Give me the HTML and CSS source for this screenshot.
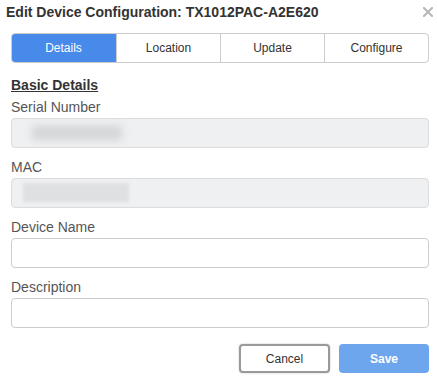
FILE: index.html
```html
<!DOCTYPE html>
<html lang="en">
<head>
    <meta charset="UTF-8">
    <meta name="viewport" content="width=device-width, initial-scale=1.0">
    <title>Edit Device Configuration</title>
    <link rel="stylesheet" href="styles.css">
</head>
<body>
    <div class="modal">
        <div class="modal-header">
            <h2>Edit Device Configuration: TX1012PAC-A2E620</h2>
            <svg class="close" width="10" height="10" viewBox="0 0 10 10">
                <path d="M1 1L9 9M9 1L1 9" stroke="#b8b8b8" stroke-width="2.2" stroke-linecap="square"/>
            </svg>
        </div>
        <div class="tabs">
            <div class="tab active">Details</div>
            <div class="tab">Location</div>
            <div class="tab">Update</div>
            <div class="tab">Configure</div>
        </div>
        <h4 class="section-title">Basic Details</h4>
        <div class="form-group first">
            <label>Serial Number</label>
            <div class="input readonly"><span class="blur blur-serial"></span></div>
        </div>
        <div class="form-group">
            <label>MAC</label>
            <div class="input readonly"><span class="blur blur-mac"></span></div>
        </div>
        <div class="form-group">
            <label for="name">Device Name</label>
            <input type="text" id="name" class="input">
        </div>
        <div class="form-group">
            <label for="desc">Description</label>
            <input type="text" id="desc" class="input">
        </div>
        <div class="actions">
            <button class="btn btn-cancel">Cancel</button>
            <button class="btn btn-save">Save</button>
        </div>
    </div>
</body>
</html>
```

FILE: styles.css
```css
* {
    margin: 0;
    padding: 0;
    box-sizing: border-box;
    font-family: 'Liberation Sans', Arial, sans-serif;
}

body {
    background: #fff;
    width: 437px;
    height: 377px;
    overflow: hidden;
}

.modal {
    padding: 0 8px 0 11px;
}

.modal-header {
    display: flex;
    justify-content: space-between;
    align-items: flex-start;
    padding-top: 4px;
    margin-left: -5px;
    margin-right: -4px;
}

.modal-header h2 {
    font-size: 14px;
    line-height: 16px;
    font-weight: bold;
    color: #333;
}

.close {
    margin-top: 3px;
}

.tabs {
    display: grid;
    grid-template-columns: repeat(4, 1fr);
    margin-top: 13px;
    height: 30px;
    border: 1px solid #ccc;
    border-radius: 4px;
    overflow: hidden;
}

.tab {
    display: flex;
    align-items: center;
    justify-content: center;
    font-size: 12px;
    color: #333;
    border-left: 1px solid #ccc;
}

.tab:first-child {
    border-left: none;
}

.tab.active {
    background: #478aea;
    color: #fff;
    margin: -1px 0 -1px -1px;
}

.section-title {
    margin-top: 13px;
    font-size: 14px;
    font-weight: bold;
    color: #333;
    text-decoration: underline;
    line-height: 18px;
}

.form-group {
    margin-top: 10px;
}

.form-group.first {
    margin-top: 4px;
}

label {
    display: block;
    font-size: 14px;
    color: #555;
    line-height: 18px;
    margin-bottom: 2px;
}

.input {
    display: block;
    width: 100%;
    height: 30px;
    border: 1px solid #ccc;
    border-radius: 4px;
    background: #fff;
    font-size: 13px;
}

.input.readonly {
    background: #eff0f2;
    border-color: #dcdcdc;
    position: relative;
    overflow: hidden;
}

.blur {
    position: absolute;
    background: #d3d4d6;
}

.blur-serial {
    left: 20px;
    top: 7px;
    width: 90px;
    height: 14px;
    filter: blur(4px);
}

.blur-mac {
    left: 11px;
    top: 4px;
    width: 106px;
    height: 19px;
    background: #dfe0e2;
    filter: blur(1.5px);
}

.actions {
    display: flex;
    justify-content: flex-end;
    gap: 9px;
    margin-top: 16px;
}

.btn {
    width: 91px;
    height: 29px;
    border-radius: 4px;
    font-size: 12px;
    cursor: pointer;
}

.btn-cancel {
    background: #fff;
    border: 2px solid #9a9a9a;
    box-shadow: 0 0 2px rgba(0, 0, 0, 0.25);
    color: #333;
}

.btn-save {
    width: 90px;
    background: #6ea6ee;
    border: none;
    color: #fff;
    font-weight: bold;
}
```
